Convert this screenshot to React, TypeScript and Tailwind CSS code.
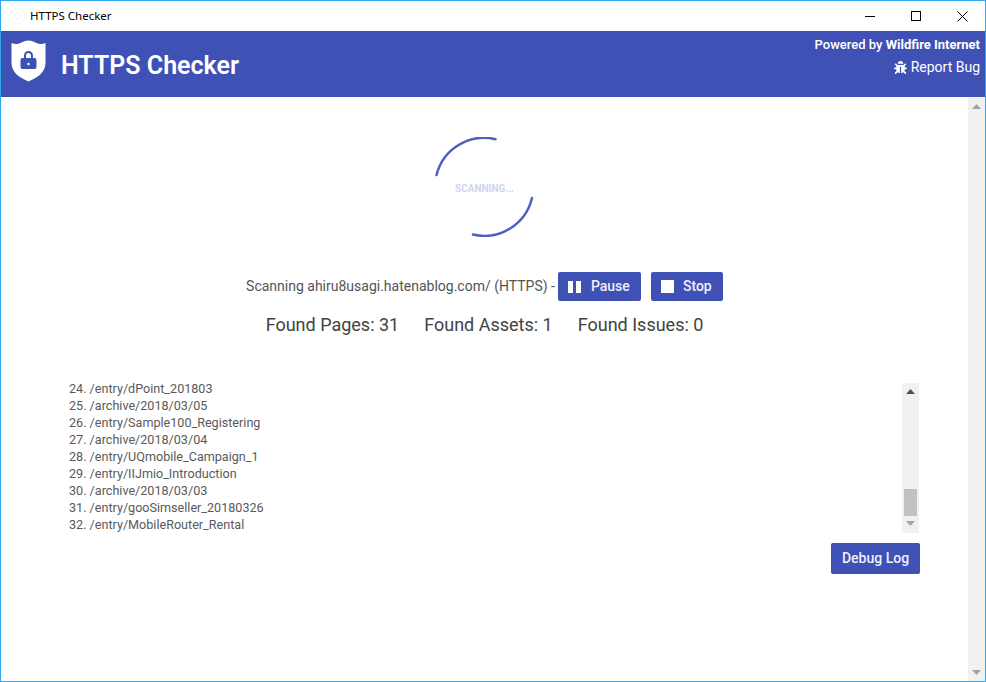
import { FaBug } from "react-icons/fa";

const logLines = [
  "24. /entry/dPoint_201803",
  "25. /archive/2018/03/05",
  "26. /entry/Sample100_Registering",
  "27. /archive/2018/03/04",
  "28. /entry/UQmobile_Campaign_1",
  "29. /entry/IIJmio_Introduction",
  "30. /archive/2018/03/03",
  "31. /entry/gooSimseller_20180326",
  "32. /entry/MobileRouter_Rental",
];

function Arrow({ down, color }: { down?: boolean; color: string }) {
  return (
    <svg width="9" height="5" viewBox="0 0 9 5" fill={color}>
      <path d={down ? "M0 0h9L4.5 5z" : "M0 5h9L4.5 0z"} />
    </svg>
  );
}

function TitleBar() {
  return (
    <div className="flex h-[30px] shrink-0 items-center justify-between bg-white">
      <div className="flex items-center">
        <svg className="ml-[8px]" width="17" height="17" viewBox="0 0 17 17" fill="none">
          <circle cx="8.5" cy="8.5" r="7.5" stroke="#ececec" strokeDasharray="2 2" />
          <circle cx="8.5" cy="8.5" r="3" stroke="#f4f4f4" />
        </svg>
        <span className="ml-[4px] font-['Noto_Sans',sans-serif] text-[11.5px] text-black">HTTPS Checker</span>
      </div>
      {/* Window controls */}
      <div className="flex h-full">
        <div className="flex w-[46px] items-center justify-center">
          <div className="h-px w-[10px] bg-black" />
        </div>
        <div className="flex w-[46px] items-center justify-center">
          <div className="h-[10px] w-[10px] border border-black" />
        </div>
        <div className="flex w-[46px] items-center justify-center">
          <svg width="11" height="11" viewBox="0 0 11 11" stroke="black" strokeWidth="1">
            <path d="M0.5 0.5l10 10M10.5 0.5l-10 10" />
          </svg>
        </div>
      </div>
    </div>
  );
}

function Header() {
  return (
    <header className="flex h-[66px] shrink-0 justify-between bg-[#3f51b5] pr-[5px] text-white">
      <div className="flex items-center">
        <svg className="ml-[9px] mt-[-6px]" width="37" height="42" viewBox="0 0 36 42">
          <path
            fill="white"
            d="M1 3c3 1 6 1.500 9 0 3-1.500 5-2.500 8-2.500s5 1 8 2.500c3 1.500 6 1 9 0v20c0 10-9 15-17 18.500C10 38 1 33 1 23z"
          />
          <path
            fill="#3f51b5"
            d="M12 18h1.500v-2.500a4.500 4.500 0 0 1 9 0V18H24a2 2 0 0 1 2 2v7a2 2 0 0 1-2 2H12a2 2 0 0 1-2-2v-7a2 2 0 0 1 2-2zm3.500 0h5v-2.500a2.500 2.500 0 0 0-5 0z"
          />
          <circle cx="18" cy="24" r="1.200" fill="white" />
        </svg>
        <h1 className="ml-[14px] mt-[3px] text-[25px] font-semibold">HTTPS Checker</h1>
      </div>
      <div className="flex flex-col items-end pt-[5px]">
        <div className="text-[13px] font-medium leading-[17px]">
          Powered by <span className="font-bold">Wildfire Internet</span>
        </div>
        <div className="mt-[6px] flex items-center text-[14px] leading-[17px]">
          <FaBug className="mr-[4px] text-[13px]" />
          Report Bug
        </div>
      </div>
    </header>
  );
}

function Spinner() {
  return (
    <div className="relative h-[100px] w-[100px]">
      <svg className="h-full w-full" viewBox="0 0 100 100" fill="none" stroke="#4f5fbd" strokeWidth="2.5" strokeLinecap="round">
        <path d="M1.500 38A49 49 0 0 1 60.500 2.200" />
        <path d="M97 61A49 49 0 0 1 38 97.500" />
      </svg>
      <div className="absolute inset-0 flex items-center justify-center pt-[3px] text-[10px] font-bold text-[#d0d5ee]">SCANNING...</div>
    </div>
  );
}

function LogBox() {
  return (
    <div className="flex h-[150px] w-full justify-between pl-[8px]">
      <div className="flex flex-col justify-end text-[12.6px] leading-[17px] text-[#5a5a5a]">
        {logLines.map((line) => (
          <div key={line}>{line}</div>
        ))}
      </div>
      {/* Scrollbar of the log */}
      <div className="flex h-full w-[17px] flex-col items-center bg-[#f1f1f1]">
        <div className="mt-[6px]">
          <Arrow color="#505050" />
        </div>
        <div className="mt-[95px] h-[27px] w-[13px] bg-[#c1c1c1]" />
        <div className="mt-[5px]">
          <Arrow down color="#a3a3a3" />
        </div>
      </div>
    </div>
  );
}

export default function App() {
  return (
    <div className="flex h-[682px] w-[986px] flex-col overflow-hidden border border-[#2ea7ee] bg-white font-['Roboto',sans-serif]">
      <TitleBar />
      <Header />
      <div className="flex min-h-0 flex-1">
        <main className="flex flex-1 flex-col items-center pt-[40px]">
          <Spinner />
          <div className="mt-[35px] flex items-center text-[14px] text-[#545454]">
            <span>Scanning ahiru8usagi.hatenablog.com/ (HTTPS) -</span>
            <button className="ml-[3px] flex h-[29px] w-[83px] items-center rounded-[2px] bg-[#3f51b5] pl-[10px] text-[14px] font-medium text-[#eef0fa]">
              <span className="flex gap-[3px]">
                <span className="h-[12px] w-[5px] bg-white" />
                <span className="h-[12px] w-[5px] bg-white" />
              </span>
              <span className="ml-[10px]">Pause</span>
            </button>
            <button className="ml-[10px] flex h-[29px] w-[72px] items-center rounded-[2px] bg-[#3f51b5] pl-[10px] text-[14px] font-medium text-[#eef0fa]">
              <span className="h-[13px] w-[13px] bg-white" />
              <span className="ml-[9px]">Stop</span>
            </button>
          </div>
          <div className="mt-[12px] flex gap-[25px] text-[18px] leading-[24px] text-[#424242]">
            <span>Found Pages: 31</span>
            <span>Found Assets: 1</span>
            <span>Found Issues: 0</span>
          </div>
          <div className="ml-[60px] mt-[46px] flex w-[858px] flex-col items-end self-start">
            <LogBox />
            <button className="mr-[-1px] mt-[10px] h-[31px] w-[89px] rounded-[2px] bg-[#3f51b5] text-[14px] font-medium text-[#eef0fa]">
              Debug Log
            </button>
          </div>
        </main>
        {/* Page scrollbar */}
        <div className="flex w-[17px] shrink-0 flex-col items-center justify-between bg-[#f1f1f1] pb-[6px] pt-[7px]">
          <Arrow color="#a3a3a3" />
          <Arrow down color="#a3a3a3" />
        </div>
      </div>
    </div>
  );
}
